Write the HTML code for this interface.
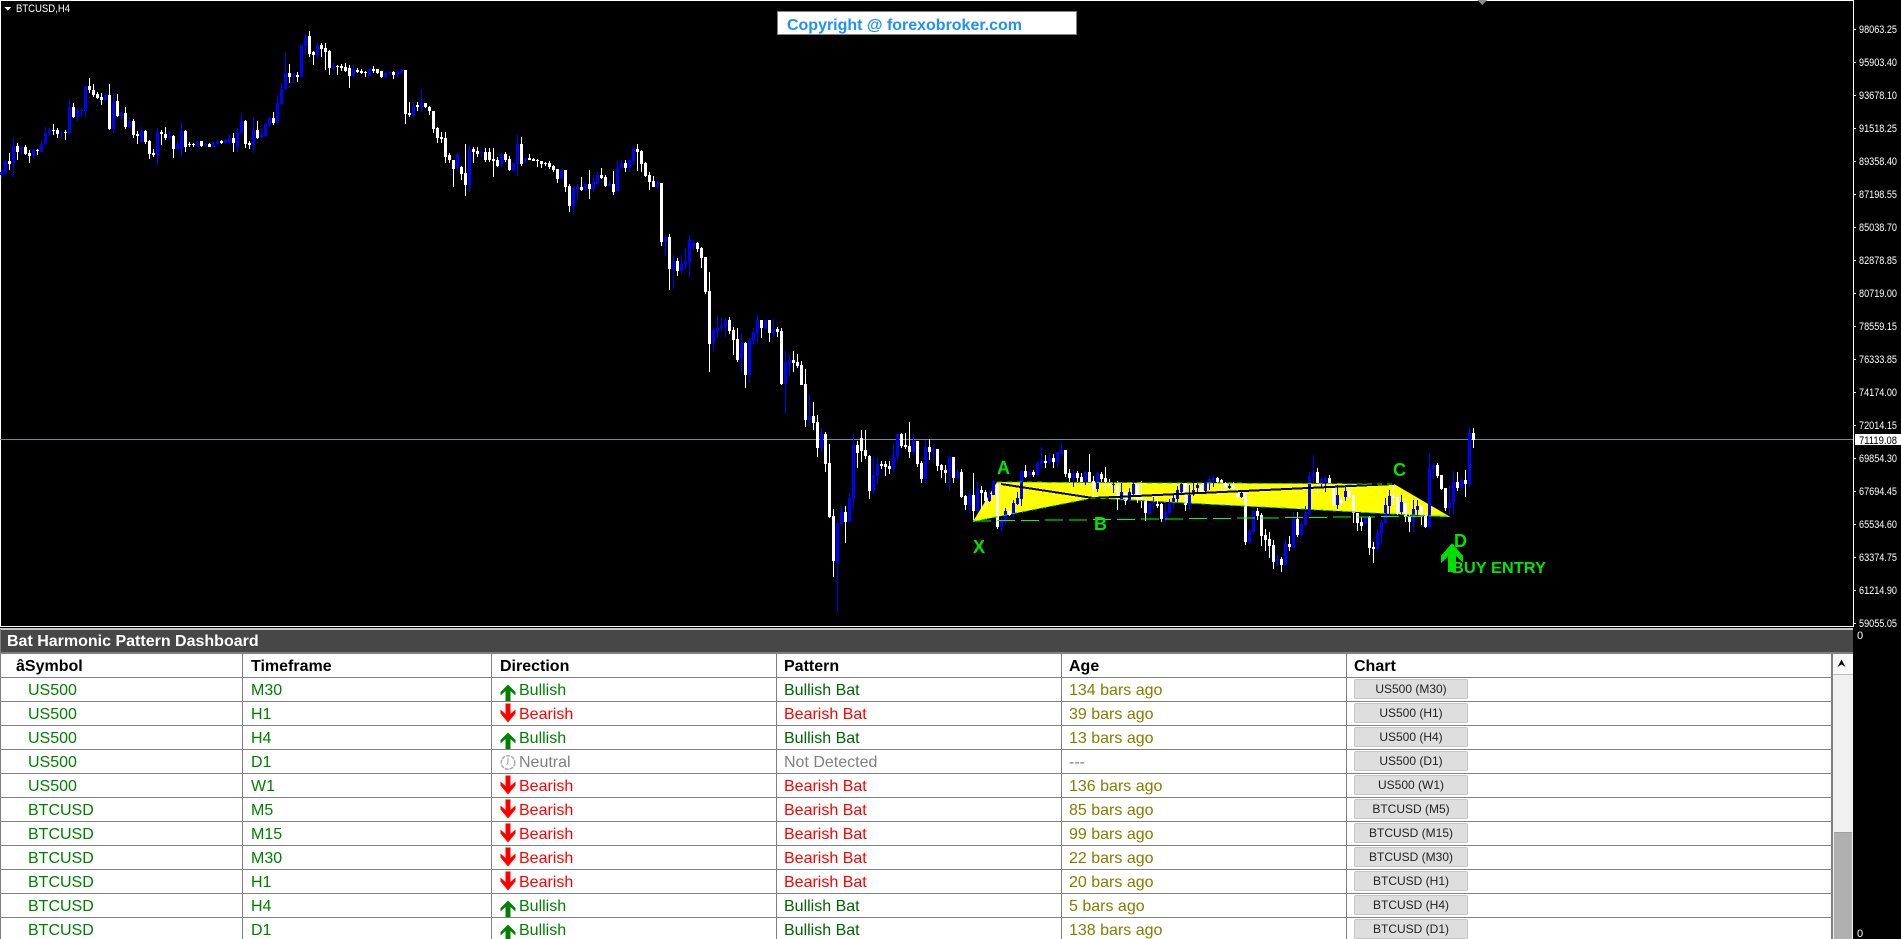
<!DOCTYPE html>
<html lang="en">
<head>
<meta charset="utf-8">
<title>BTCUSD,H4 - Bat Harmonic Pattern Dashboard</title>
<style>
html,body{margin:0;padding:0;background:#000;width:1901px;height:939px;overflow:hidden}
body{position:relative;font-family:"Liberation Sans",Arial,sans-serif}
svg.chart{position:absolute;left:0;top:0;display:block}
.sep{position:absolute;left:0;background:#fff}
#title{position:absolute;left:1px;top:630px;width:1852px;height:22px;background:#474747;color:#fff;font:bold 16px/24px "Liberation Sans",Arial,sans-serif;box-sizing:border-box;padding-left:6px}
#tline{position:absolute;left:0;top:652px;width:1853px;height:2px;background:#808080}
#lb{position:absolute;left:0;top:629px;width:1px;height:310px;background:#808080}
#wrap{position:absolute;left:1px;top:654px;width:1830px;height:285px;overflow:hidden;background:#fff;border-right:2px solid #808080}
table{border-collapse:separate;border-spacing:0;table-layout:fixed;width:1830px;font:16px "Liberation Sans",Arial,sans-serif}
th,td{box-sizing:border-box;height:24px;padding:2px 0 0 8px;line-height:21px;text-align:left;white-space:nowrap;vertical-align:top;border-right:1px solid #808080;border-bottom:1px solid #808080;position:relative;overflow:hidden}
th{font-weight:bold;color:#000}
th:last-child,td:last-child{border-right:0}
td.s{padding-left:27px;color:#008000}
th.s{padding-left:15px}
td.t{color:#008000}
td.a{color:#808000}
td.p{padding-left:7px}
th.p{padding-left:7px}
td.d{padding-left:27px}
.g{color:#008000}.pg{color:#006400}.r{color:#f00}.n{color:#808080}
td svg{position:absolute;left:8px;top:0}
.b{position:absolute;left:7px;top:1px;width:114px;height:20px;box-sizing:border-box;border:1px solid #c6c6c6;border-radius:2px;background:#dedede;color:#222;font:12px/18px "Liberation Sans",Arial,sans-serif;text-align:center}
#sb{position:absolute;left:1833px;top:654px;width:20px;height:285px;background:#f0f0f0}
#up{position:absolute;left:0;top:0;width:20px;height:20px;background:#f9f9f9;border-bottom:1px solid #bdbdbd}
#th{position:absolute;left:1px;top:178px;width:18px;height:107px;background:#b0b0b0;border-top:1px solid #a0a0a0;box-sizing:border-box}
</style>
</head>
<body>
<svg class="chart" width="1901" height="939" viewBox="0 0 1901 939" xmlns="http://www.w3.org/2000/svg" shape-rendering="crispEdges">
<rect x="0" y="0" width="1853" height="1" fill="#fff"/>
<rect x="0" y="0" width="1" height="627" fill="#fff"/>
<rect x="1853" y="0" width="1" height="627" fill="#fff"/>
<rect x="0" y="439" width="1853" height="1" fill="#778899"/>
<path d="M1477 0H1487L1482 5Z" fill="#8a8a8a"/>
<path d="M4 7H11L7.500 10.500Z" fill="#fff"/>

<path d="M973 521.500L997 482L1394 484L1450.500 517L1093 498Z" fill="#ffff00" shape-rendering="auto"/>

<g transform="translate(.5 0)">
<path fill="none" stroke="#fff" stroke-width="1" d="M9 153V170M17 143V160M25 145V155M29 150V163M37 149V155M53 124V135M57 128V138M65 130V140M73 103V118M89 78V93M93 84V97M97 92V99M101 93V105M109 84V130M117 94V117M125 107V129M133 119V138M137 131V144M145 130V144M149 140V159M153 149V157M161 130V145M165 127V140M173 135V158M185 130V152M189 142V147M193 143V147M201 141V147M209 143V147M221 140V144M233 133V152M245 120V148M249 141V149M257 121V139M273 112V125M289 64V83M297 72V82M309 31V57M313 51V65M321 43V57M325 43V70M329 50V75M337 65V75M341 64V71M345 63V72M349 65V88M357 68V73M361 69V74M365 71V77M373 66V73M377 69V74M381 71V78M393 71V79M405 70V124M409 102V117M417 102V111M425 103V108M429 106V115M433 111V133M437 127V143M441 132V143M445 132V163M449 153V163M453 160V187M461 166V180M465 144V196M473 147V163M477 147V157M485 148V162M489 148V162M493 148V177M497 157V167M505 152V162M509 156V171M521 137V166M529 154V160M533 158V161M537 159V167M541 161V168M545 162V166M549 161V169M553 165V172M557 169V183M565 170V192M569 184V212M581 177V191M589 170V199M601 168V179M605 175V187M613 171V195M625 160V172M637 144V171M641 150V172M645 162V177M649 172V190M653 176V187M661 183V246M669 234V290M677 258V276M697 242V252M701 247V268M705 257V294M709 272V372M729 317V334M733 327V355M737 328V362M745 342V388M761 320V338M769 320V342M777 327V337M781 328V385M793 351V372M797 354V368M801 361V385M805 369V427M813 402V430M817 415V457M825 432V472M829 444V518M833 509V577M845 506V543M857 441V468M861 430V462M865 430V459M869 455V499M881 461V469M885 461V476M889 461V474M901 433V448M905 433V449M909 422V458M917 441V467M921 461V483M929 439V460M937 449V471M941 464V478M945 465V483M953 457V483M961 469V498M965 495V510M973 473V520M981 486V509M985 490V509M997 484V529M1009 508V516M1025 465V478M1033 470V477M1045 455V468M1053 454V468M1065 450V477M1069 469V485M1077 471V483M1081 473V486M1089 454V485M1093 476V497M1101 472V482M1105 467V490M1109 479V488M1117 481V510M1125 492V505M1137 483V503M1141 481V508M1145 497V521M1157 497V508M1161 503V522M1185 483V511M1201 483V493M1217 477V484M1221 479V490M1225 482V489M1233 482V492M1237 489V501M1245 492V545M1257 508V520M1261 513V546M1265 529V551M1269 532V558M1273 540V569M1281 557V572M1289 536V551M1297 512V537M1317 468V494M1329 475V488M1333 485V506M1341 497V506M1349 488V498M1353 495V523M1357 513V531M1361 517V531M1369 516V555M1373 542V563M1393 485V505M1397 495V515M1405 498V522M1409 513V532M1421 506V525M1425 513V528M1437 463V478M1441 475V490M1445 488V511M1457 472V491M1465 470V497M1473 428V448"/>
<path fill="none" stroke="#fff" stroke-width="3" d="M9 161V164M17 146V152M25 147V154M29 153V156M37 150V151M53 130V131M57 130V134M65 132V133M73 107V117M89 86V90M93 90V95M97 94V98M101 97V100M109 95V129M117 101V116M125 113V127M133 121V135M137 134V136M145 131V142M149 141V154M153 153V155M161 132V134M165 134V138M173 136V149M185 131V147M189 144V145M193 144V145M201 141V146M209 144V147M221 141V143M233 138V143M245 121V144M249 143V145M257 130V138M273 118V123M289 73V77M297 75V77M309 36V54M313 52V55M321 45V49M325 48V52M329 51V68M337 66V67M341 66V68M345 67V71M349 68V76M357 70V72M361 71V73M365 72V73M373 69V71M377 69V73M381 71V77M393 72V75M405 70V114M409 113V115M417 105V107M425 103V107M429 107V111M433 111V129M437 128V138M441 137V139M445 138V157M449 155V160M453 160V169M461 167V174M465 173V185M473 149V152M477 151V154M485 152V160M489 152V160M493 159V161M497 160V166M505 154V160M509 159V170M521 144V164M529 158V160M533 159V161M537 160V161M541 161V164M545 163V164M549 163V167M553 166V170M557 169V179M565 170V187M569 186V206M581 187V190M589 184V189M601 175V178M605 177V186M613 184V192M625 163V168M637 149V152M641 151V164M645 163V176M649 175V182M653 181V187M661 183V242M669 237V269M677 261V271M697 243V249M701 248V258M705 257V292M709 291V344M729 320V331M733 330V340M737 339V360M745 343V375M761 320V328M769 320V333M777 329V332M781 331V384M793 360V363M797 362V366M801 365V385M805 384V420M813 416V423M817 422V448M825 434V464M829 463V517M833 516V561M845 512V522M857 445V453M861 438V451M865 450V456M869 456V491M881 464V466M885 464V467M889 466V469M901 434V446M905 445V447M909 446V452M917 441V464M921 463V479M929 447V452M937 449V466M941 465V470M945 470V473M953 457V478M961 472V497M965 496V505M973 495V511M981 490V493M985 492V501M997 484V527M1009 511V515M1025 471V477M1033 472V475M1045 461V463M1053 458V462M1065 450V474M1069 473V478M1077 473V478M1081 477V482M1089 472V482M1093 481V489M1101 474V479M1105 478V482M1109 482V486M1117 485V496M1125 492V501M1137 484V499M1141 496V499M1145 499V513M1157 504V506M1161 504V519M1185 483V505M1201 485V492M1217 478V482M1221 480V483M1225 483V488M1233 486V489M1237 492V497M1245 493V542M1257 511V516M1261 515V536M1265 535V540M1269 539V546M1273 545V562M1281 559V565M1289 544V547M1297 519V535M1317 472V483M1329 478V483M1333 488V505M1341 500V503M1349 491V497M1353 496V513M1357 513V523M1361 522V526M1369 517V548M1373 547V549M1393 496V498M1397 497V513M1405 503V517M1409 517V522M1421 506V515M1425 515V527M1437 465V476M1441 475V489M1445 488V508M1457 482V488M1465 480V484M1473 433V440"/>
<path fill="none" stroke="#0000ff" stroke-width="1" d="M1 168V179M5 160V174M13 137V177M21 146V155M33 149V158M41 142V152M45 127V145M49 128V135M61 131V137M69 100V134M77 108V121M81 108V117M85 86V117M105 93V101M113 93V133M121 112V120M129 120V128M141 127V142M157 128V165M169 131V140M177 142V150M181 122V157M197 141V147M205 142V147M213 142V147M217 140V145M225 139V144M229 135V143M237 128V152M241 113V134M253 117V153M261 128V138M265 123V137M269 117V127M277 95V123M281 83V105M285 52V90M293 74V83M301 45V77M305 33V55M317 43V58M333 63V70M353 65V77M369 68V76M385 72V78M389 71V74M397 71V77M401 69V73M413 102V117M421 89V112M457 153V170M469 146V192M481 150V157M501 154V167M513 163V172M517 135V176M525 158V163M561 170V179M573 186V214M577 184V199M585 183V190M593 175V192M597 172V184M609 181V186M617 160V193M621 160V169M629 159V172M633 146V165M657 181V189M665 235V256M673 255V289M681 255V274M685 248V270M689 235V278M693 240V250M713 327V351M717 316V337M721 318V331M725 318V337M741 333V371M749 338V383M753 328V345M757 314V343M765 320V329M773 319V337M785 351V414M789 354V376M809 394V426M821 428V452M837 522V612M841 506V524M849 492V522M853 434V509M873 457V494M877 457V484M893 444V472M897 434V460M913 434V455M925 440V483M933 445V462M949 456V490M957 469V479M969 491V513M977 482V512M989 490V502M993 481V495M1001 518V532M1005 508V524M1013 500V518M1017 492V505M1021 471V506M1029 471V476M1037 461V476M1041 447V468M1049 453V464M1057 452V467M1061 442V455M1073 472V487M1085 471V485M1097 472V492M1113 482V493M1121 483V502M1129 488V502M1133 480V495M1149 503V515M1153 497V509M1165 502V523M1169 499V514M1173 495V509M1177 486V502M1181 483V495M1189 485V510M1193 481V496M1197 483V492M1205 482V492M1209 476V490M1213 475V487M1229 484V489M1241 491V498M1249 529V544M1253 510V533M1277 555V566M1285 539V566M1293 512V548M1301 522V536M1305 506V526M1309 472V515M1313 455V483M1321 477V487M1325 477V492M1337 485V509M1345 485V501M1365 517V525M1377 529V550M1381 520V543M1385 498V524M1389 490V516M1401 495V515M1413 500V532M1417 500V515M1429 453V529M1433 463V479M1449 486V515M1453 471V515M1461 479V488M1469 427V487"/>
<path fill="none" stroke="#0000ff" stroke-width="3" d="M1 172V175M5 161V173M13 146V163M21 147V149M33 150V156M41 144V152M45 133V144M49 130V133M61 132V133M69 107V133M77 111V117M81 110V111M85 86V111M105 95V100M113 102V129M121 113V116M129 122V127M141 131V142M157 132V155M169 136V138M177 144V149M181 131V149M197 142V146M205 144V145M213 143V147M217 141V144M225 140V143M229 138V143M237 132V147M241 121V133M253 130V145M261 134V137M265 124V136M269 118V125M277 103V122M281 89V104M285 73V89M293 75V77M301 45V77M305 38V46M317 45V55M333 66V68M353 69V76M369 69V76M385 73V77M389 72V73M397 72V75M401 70V73M413 106V115M421 103V107M457 154V168M469 149V185M481 152V153M501 154V165M513 163V170M517 144V164M525 158V161M561 170V179M573 188V206M577 187V189M585 184V190M593 182V189M597 175V184M609 184V186M617 168V191M621 163V168M629 160V168M633 149V161M657 183V187M665 237V242M673 261V269M681 264V271M685 261V265M689 240V262M693 243V246M713 330V343M717 328V332M721 326V328M725 320V327M741 343V359M749 340V375M753 332V341M757 320V333M765 320V329M773 329V333M785 362V384M789 360V364M809 416V420M821 434V448M837 523V562M841 512V524M849 498V522M853 445V499M873 475V491M877 464V476M893 455V469M897 434V456M913 441V452M925 447V479M933 449V451M949 457V473M957 472V478M969 495V505M977 489V511M989 494V501M993 481V495M1001 520V527M1005 511V522M1013 503V515M1017 498V504M1021 471V499M1029 472V475M1037 463V475M1041 461V464M1049 458V462M1057 452V462M1061 450V454M1073 473V478M1085 472V482M1097 473V489M1113 484V485M1121 492V500M1129 492V500M1133 484V494M1149 503V513M1153 503V504M1165 512V519M1169 503V513M1173 498V503M1177 490V499M1181 484V492M1189 495V505M1193 490V493M1197 485V488M1205 482V491M1209 479V483M1213 478V480M1229 486V488M1241 493V497M1249 531V542M1253 511V532M1277 559V561M1285 544V565M1293 519V548M1301 524V535M1305 513V525M1309 476V514M1313 473V477M1321 479V483M1325 478V482M1337 495V505M1345 491V497M1365 518V524M1377 533V549M1381 522V534M1385 505V523M1389 496V506M1401 502V512M1413 509V522M1417 506V510M1429 468V527M1433 465V469M1449 503V508M1453 482V503M1461 480V488M1469 433V484"/>
</g>

<path d="M1001 484L1093 498L1394 484" fill="none" stroke="#000" stroke-width="2"/>
<path d="M997 482L1394 484" fill="none" stroke="#00e000" stroke-width="1" stroke-dasharray="5 5"/>
<path d="M973 521.500L1093 498L1450.500 517" fill="none" stroke="#00e000" stroke-width="1" stroke-dasharray="5 5"/>
<path d="M973 521L1450 516" fill="none" stroke="#00ff00" stroke-width="1" stroke-dasharray="18 6"/>

<path d="M1452 543L1463 556V563L1456 556V572H1448V556L1441 563V556Z" fill="#00e000"/>

<g shape-rendering="auto" font-family="'Liberation Sans',Arial,sans-serif" font-weight="bold" fill="#00e400">
<text x="997" y="474" font-size="18">A</text>
<text x="973" y="553" font-size="18">X</text>
<text x="1094" y="530" font-size="18">B</text>
<text x="1393" y="476" font-size="18">C</text>
<text x="1454" y="547" font-size="18">D</text>
<text x="1452" y="573" font-size="16" textLength="94" lengthAdjust="spacingAndGlyphs">BUY ENTRY</text>
</g>

<text x="16" y="12" font-family="'Liberation Sans',Arial,sans-serif" font-size="11" fill="#fff" textLength="54" lengthAdjust="spacingAndGlyphs" shape-rendering="auto">BTCUSD,H4</text>

<rect x="777.500" y="11.500" width="299" height="23" fill="#fff" stroke="#808080"/>
<text x="787" y="30" font-family="'Liberation Sans',Arial,sans-serif" font-size="16" font-weight="bold" fill="#1e90ff" textLength="235" lengthAdjust="spacingAndGlyphs">Copyright @ forexobroker.com</text>

<g fill="#fff">
<rect x="1854" y="29" width="2" height="1"/><rect x="1854" y="62" width="2" height="1"/><rect x="1854" y="95" width="2" height="1"/><rect x="1854" y="128" width="2" height="1"/><rect x="1854" y="161" width="2" height="1"/><rect x="1854" y="194" width="2" height="1"/><rect x="1854" y="227" width="2" height="1"/><rect x="1854" y="260" width="2" height="1"/><rect x="1854" y="293" width="2" height="1"/><rect x="1854" y="326" width="2" height="1"/><rect x="1854" y="359" width="2" height="1"/><rect x="1854" y="392" width="2" height="1"/><rect x="1854" y="425" width="2" height="1"/><rect x="1854" y="458" width="2" height="1"/><rect x="1854" y="491" width="2" height="1"/><rect x="1854" y="524" width="2" height="1"/><rect x="1854" y="557" width="2" height="1"/><rect x="1854" y="590" width="2" height="1"/><rect x="1854" y="623" width="2" height="1"/>
</g>
<rect x="1855" y="434" width="46" height="11" fill="#fff"/>
<g font-family="'Liberation Sans',Arial,sans-serif" font-size="11" fill="#fff" shape-rendering="auto">
<text x="1859" y="33" textLength="38" lengthAdjust="spacingAndGlyphs">98063.25</text>
<text x="1859" y="66" textLength="38" lengthAdjust="spacingAndGlyphs">95903.40</text>
<text x="1859" y="99" textLength="38" lengthAdjust="spacingAndGlyphs">93678.10</text>
<text x="1859" y="132" textLength="38" lengthAdjust="spacingAndGlyphs">91518.25</text>
<text x="1859" y="165" textLength="38" lengthAdjust="spacingAndGlyphs">89358.40</text>
<text x="1859" y="198" textLength="38" lengthAdjust="spacingAndGlyphs">87198.55</text>
<text x="1859" y="231" textLength="38" lengthAdjust="spacingAndGlyphs">85038.70</text>
<text x="1859" y="264" textLength="38" lengthAdjust="spacingAndGlyphs">82878.85</text>
<text x="1859" y="297" textLength="38" lengthAdjust="spacingAndGlyphs">80719.00</text>
<text x="1859" y="330" textLength="38" lengthAdjust="spacingAndGlyphs">78559.15</text>
<text x="1859" y="363" textLength="38" lengthAdjust="spacingAndGlyphs">76333.85</text>
<text x="1859" y="396" textLength="38" lengthAdjust="spacingAndGlyphs">74174.00</text>
<text x="1859" y="429" textLength="38" lengthAdjust="spacingAndGlyphs">72014.15</text>
<text x="1859" y="444" textLength="38" lengthAdjust="spacingAndGlyphs" fill="#000">71119.08</text>
<text x="1859" y="462" textLength="38" lengthAdjust="spacingAndGlyphs">69854.30</text>
<text x="1859" y="495" textLength="38" lengthAdjust="spacingAndGlyphs">67694.45</text>
<text x="1859" y="528" textLength="38" lengthAdjust="spacingAndGlyphs">65534.60</text>
<text x="1859" y="561" textLength="38" lengthAdjust="spacingAndGlyphs">63374.75</text>
<text x="1859" y="594" textLength="38" lengthAdjust="spacingAndGlyphs">61214.90</text>
<text x="1859" y="627" textLength="38" lengthAdjust="spacingAndGlyphs">59055.05</text>
<text x="1857" y="639">0</text>
<text x="1857" y="937">0</text>
</g>
</svg>

<div class="sep" style="top:626px;width:1853px;height:1px"></div>
<div class="sep" style="top:628px;width:1853px;height:2px;background:#c8c8c8"></div>
<div id="lb"></div>
<div id="title">Bat Harmonic Pattern Dashboard</div>
<div id="tline"></div>

<div id="wrap">
<table>
<colgroup><col style="width:242px"><col style="width:249px"><col style="width:285px"><col style="width:285px"><col style="width:285px"><col style="width:484px"></colgroup>
<tr><th class="s">âSymbol</th><th>Timeframe</th><th>Direction</th><th class="p">Pattern</th><th class="p">Age</th><th class="p">Chart</th></tr>

<tr><td class="s">US500</td><td class="t">M30</td><td class="d g"><svg width="16" height="24" viewBox="0 0 16 24"><path d="M8 6.500L15.500 14V17.500L10.500 13V23H5.500V13L.5 17.500V14Z" fill="#008000"/></svg>Bullish</td><td class="p pg">Bullish Bat</td><td class="a p">134 bars ago</td><td><span class="b">US500 (M30)</span></td></tr>
<tr><td class="s">US500</td><td class="t">H1</td><td class="d r"><svg width="16" height="24" viewBox="0 0 16 24"><path d="M5.500 1.500H10.500V12L15.500 7.500V11.500L8 20.500L.5 11.500V7.500L5.500 12Z" fill="#f00"/></svg>Bearish</td><td class="p r">Bearish Bat</td><td class="a p">39 bars ago</td><td><span class="b">US500 (H1)</span></td></tr>
<tr><td class="s">US500</td><td class="t">H4</td><td class="d g"><svg width="16" height="24" viewBox="0 0 16 24"><path d="M8 6.500L15.500 14V17.500L10.500 13V23H5.500V13L.5 17.500V14Z" fill="#008000"/></svg>Bullish</td><td class="p pg">Bullish Bat</td><td class="a p">13 bars ago</td><td><span class="b">US500 (H4)</span></td></tr>
<tr><td class="s">US500</td><td class="t">D1</td><td class="d n"><svg width="16" height="24" viewBox="0 0 16 24"><circle cx="8" cy="12.500" r="6.800" fill="#fff" stroke="#aaa" stroke-width="1.500" stroke-dasharray="4 1"/><path d="M8 8V12.500L6.500 15" fill="none" stroke="#999" stroke-width="1"/></svg>Neutral</td><td class="p n">Not Detected</td><td class="n p">---</td><td><span class="b">US500 (D1)</span></td></tr>
<tr><td class="s">US500</td><td class="t">W1</td><td class="d r"><svg width="16" height="24" viewBox="0 0 16 24"><path d="M5.500 1.500H10.500V12L15.500 7.500V11.500L8 20.500L.5 11.500V7.500L5.500 12Z" fill="#f00"/></svg>Bearish</td><td class="p r">Bearish Bat</td><td class="a p">136 bars ago</td><td><span class="b">US500 (W1)</span></td></tr>
<tr><td class="s">BTCUSD</td><td class="t">M5</td><td class="d r"><svg width="16" height="24" viewBox="0 0 16 24"><path d="M5.500 1.500H10.500V12L15.500 7.500V11.500L8 20.500L.5 11.500V7.500L5.500 12Z" fill="#f00"/></svg>Bearish</td><td class="p r">Bearish Bat</td><td class="a p">85 bars ago</td><td><span class="b">BTCUSD (M5)</span></td></tr>
<tr><td class="s">BTCUSD</td><td class="t">M15</td><td class="d r"><svg width="16" height="24" viewBox="0 0 16 24"><path d="M5.500 1.500H10.500V12L15.500 7.500V11.500L8 20.500L.5 11.500V7.500L5.500 12Z" fill="#f00"/></svg>Bearish</td><td class="p r">Bearish Bat</td><td class="a p">99 bars ago</td><td><span class="b">BTCUSD (M15)</span></td></tr>
<tr><td class="s">BTCUSD</td><td class="t">M30</td><td class="d r"><svg width="16" height="24" viewBox="0 0 16 24"><path d="M5.500 1.500H10.500V12L15.500 7.500V11.500L8 20.500L.5 11.500V7.500L5.500 12Z" fill="#f00"/></svg>Bearish</td><td class="p r">Bearish Bat</td><td class="a p">22 bars ago</td><td><span class="b">BTCUSD (M30)</span></td></tr>
<tr><td class="s">BTCUSD</td><td class="t">H1</td><td class="d r"><svg width="16" height="24" viewBox="0 0 16 24"><path d="M5.500 1.500H10.500V12L15.500 7.500V11.500L8 20.500L.5 11.500V7.500L5.500 12Z" fill="#f00"/></svg>Bearish</td><td class="p r">Bearish Bat</td><td class="a p">20 bars ago</td><td><span class="b">BTCUSD (H1)</span></td></tr>
<tr><td class="s">BTCUSD</td><td class="t">H4</td><td class="d g"><svg width="16" height="24" viewBox="0 0 16 24"><path d="M8 6.500L15.500 14V17.500L10.500 13V23H5.500V13L.5 17.500V14Z" fill="#008000"/></svg>Bullish</td><td class="p pg">Bullish Bat</td><td class="a p">5 bars ago</td><td><span class="b">BTCUSD (H4)</span></td></tr>
<tr><td class="s">BTCUSD</td><td class="t">D1</td><td class="d g"><svg width="16" height="24" viewBox="0 0 16 24"><path d="M8 6.500L15.500 14V17.500L10.500 13V23H5.500V13L.5 17.500V14Z" fill="#008000"/></svg>Bullish</td><td class="p pg">Bullish Bat</td><td class="a p">138 bars ago</td><td><span class="b">BTCUSD (D1)</span></td></tr>
</table>
</div>

<div id="sb">
<div id="up"><svg width="20" height="20" viewBox="0 0 20 20" style="display:block"><path d="M4.500 13L8.500 5.500L12.500 13L8.500 10.500Z" fill="#111"/></svg></div>
<div id="th"></div>
</div>
</body>
</html>
